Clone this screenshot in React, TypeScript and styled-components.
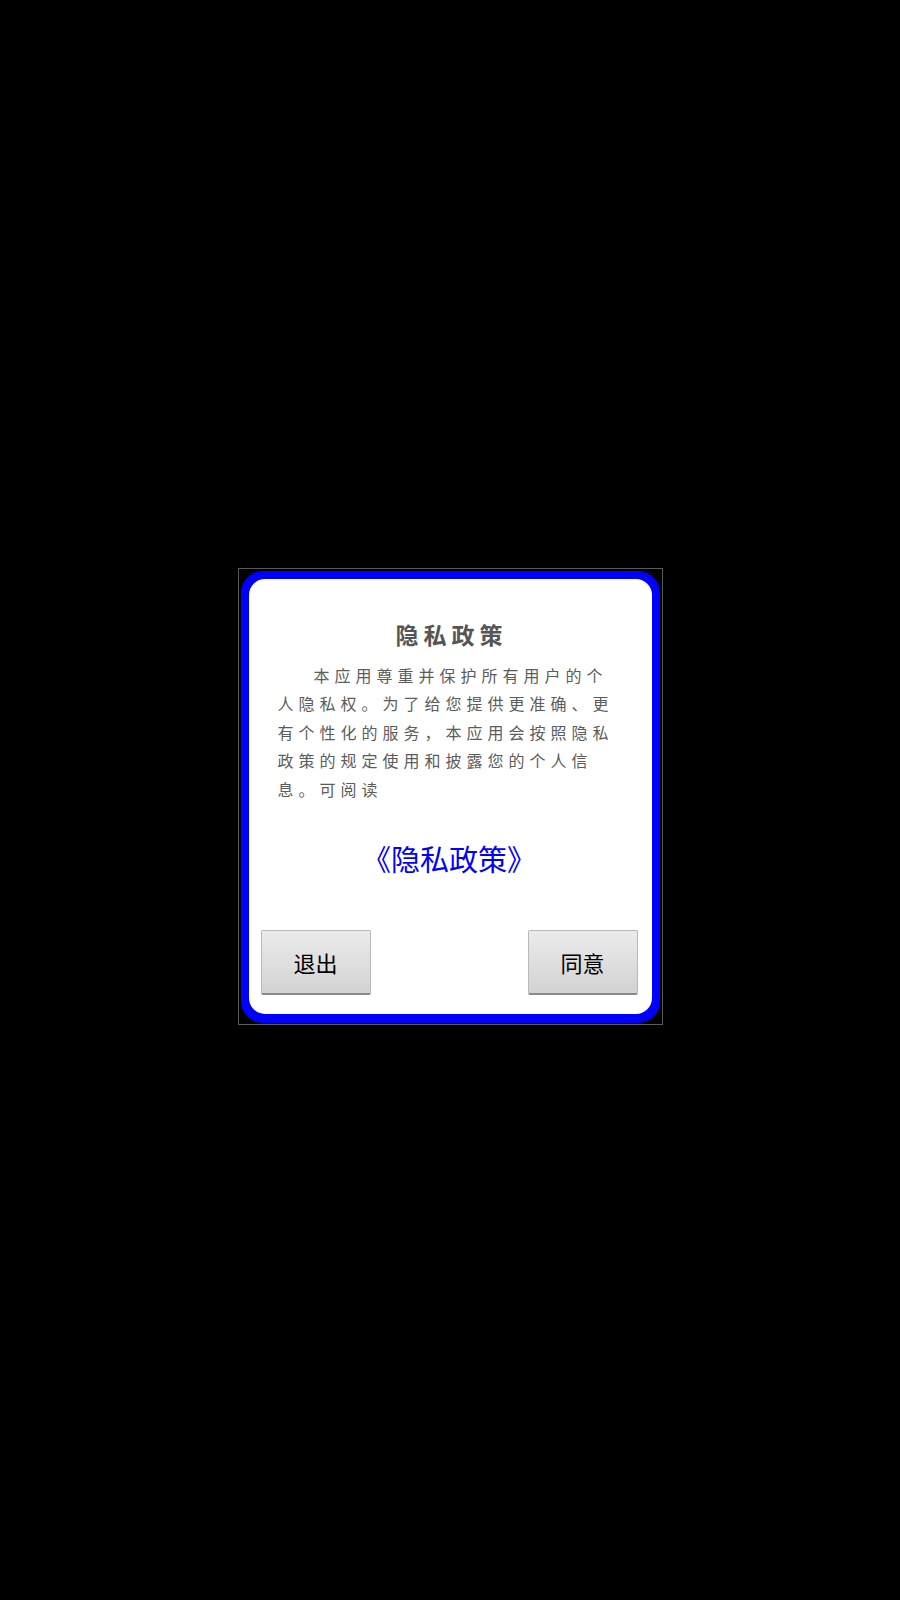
import React from 'react';
import styled, { createGlobalStyle } from 'styled-components';

const GlobalStyle = createGlobalStyle`
  html, body {
    margin: 0;
    padding: 0;
    background: #000;
  }
  body {
    font-family: "Noto Sans CJK SC", "Noto Sans", sans-serif;
  }
`;

const Screen = styled.div`
  min-height: 1600px;
  background: #000;
  display: flex;
  flex-direction: column;
  align-items: center;
  padding-top: 568px;
  box-sizing: border-box;
`;

const Frame = styled.div`
  width: 425px;
  box-sizing: border-box;
  border: 1px solid #5a5a5a;
  padding: 2px 2px 1px 2px;
`;

const BlueShell = styled.div`
  background: #0000ff;
  border-radius: 22px;
  padding: 8px 8px 9px 8px;
`;

const Card = styled.div`
  background: #fff;
  border-radius: 16px;
  padding: 40px 14px 19px 12px;
  display: flex;
  flex-direction: column;
`;

const Title = styled.h2`
  margin: 0;
  font-size: 23px;
  line-height: 31px;
  font-weight: bold;
  color: #555;
  letter-spacing: 5px;
  padding-left: 5px;
  text-align: center;
`;

const Body = styled.p`
  margin: 11px 0 0 17px;
  width: 344px;
  font-size: 16px;
  line-height: 28.4px;
  color: #5c5c5c;
  letter-spacing: 5px;
  text-indent: 36px;
  text-align: left;
`;

const PolicyLink = styled.a`
  display: block;
  margin-top: 35px;
  font-size: 29px;
  line-height: 40px;
  color: #0000ff;
  text-align: center;
  text-decoration: none;
  cursor: pointer;
`;

const ButtonRow = styled.div`
  display: flex;
  justify-content: space-between;
  margin-top: 52px;
`;

const DialogButton = styled.button`
  width: 110px;
  height: 65px;
  box-sizing: border-box;
  border: 1px solid #b9b9b9;
  border-bottom: 2px solid #8a8a8a;
  border-radius: 2px;
  background: linear-gradient(to bottom, #ebebeb 0%, #dedede 55%, #d2d2d2 100%);
  font-family: "Noto Sans CJK SC", "Noto Sans", sans-serif;
  font-size: 22px;
  color: #000;
  padding: 0;
  cursor: pointer;
`;

export default function App() {
  return (
    <>
      <GlobalStyle />
      <Screen>
        <Frame>
          <BlueShell>
            <Card>
              <Title>隐私政策</Title>
              <Body>
                本应用尊重并保护所有用户的个人隐私权。为了给您提供更准确、更有个性化的服务，本应用会按照隐私政策的规定使用和披露您的个人信息。可阅读
              </Body>
              <PolicyLink>《隐私政策》</PolicyLink>
              <ButtonRow>
                <DialogButton>退出</DialogButton>
                <DialogButton>同意</DialogButton>
              </ButtonRow>
            </Card>
          </BlueShell>
        </Frame>
      </Screen>
    </>
  );
}
